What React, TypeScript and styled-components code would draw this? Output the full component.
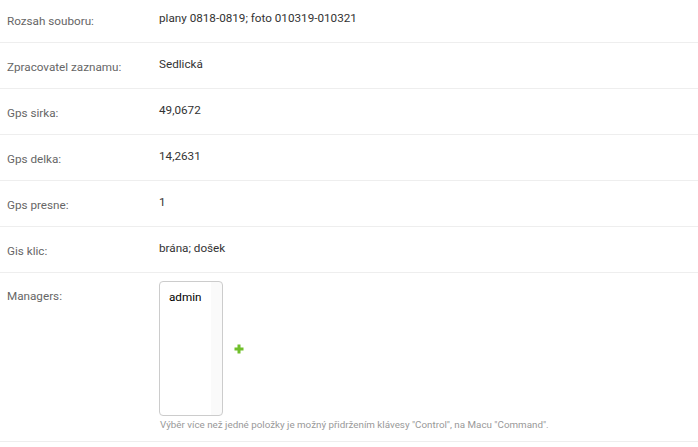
import React from "react";
import styled, { createGlobalStyle } from "styled-components";

const Global = createGlobalStyle`
  html, body { margin: 0; padding: 0; background: #fff; }
  body { font-family: Roboto, "Liberation Sans", sans-serif; color: #333; }
`;

const Fieldset = styled.div`
  margin-top: -3px;
  display: flex;
  flex-direction: column;
`;

const Row = styled.div<{ $top?: number }>`
  display: flex;
  align-items: flex-start;
  padding: ${(p) => p.$top ?? 10}px 7px 10px;
  border-bottom: 1px solid #eee;
  font-size: 11.7px;
`;

const Label = styled.div<{ $top?: number }>`
  width: 152px;
  flex: none;
  color: #666;
  padding-top: ${(p) => p.$top ?? 6}px;
  line-height: 16px;
`;

const Value = styled.div`
  padding: 3px 0 6px;
  line-height: 16px;
  color: #333;
`;

const Field = styled.div`
  display: flex;
  flex-direction: column;
`;

const SelectLine = styled.div`
  display: flex;
  align-items: center;
  gap: 11px;
`;

const MultiSelect = styled.div`
  width: 62px;
  height: 133px;
  border: 1px solid #ccc;
  border-radius: 4px;
  background: linear-gradient(to right, #fff 0, #fff 51px, #fafafa 51px);
  box-sizing: content-box;
`;

const Option = styled.div`
  padding: 7px 0 0 9px;
  font-size: 11.7px;
  line-height: 16px;
  color: #000;
`;

const Help = styled.div`
  margin-top: 3px;
  padding-left: 1px;
  font-size: 9.8px;
  line-height: 12px;
  color: #999;
  white-space: nowrap;
`;

const AddLink = styled.a`
  display: inline-flex;
  width: 10px;
  height: 10px;
`;

const PlusIcon = () => (
  <svg width="10" height="10" viewBox="0 0 10 10">
    <path d="M3.5 0.5h3v3h3v3h-3v3h-3v-3h-3v-3h3z" fill="#70bf2b" />
  </svg>
);

const rows: [string, string][] = [
  ["Rozsah souboru:", "plany 0818-0819; foto 010319-010321"],
  ["Zpracovatel zaznamu:", "Sedlická"],
  ["Gps sirka:", "49,0672"],
  ["Gps delka:", "14,2631"],
  ["Gps presne:", "1"],
  ["Gis klic:", "brána; došek"],
];

export default function App() {
  return (
    <>
      <Global />
      <Fieldset>
        {rows.map(([l, v]) => (
          <Row key={l}>
            <Label>{l}</Label>
            <Value>{v}</Value>
          </Row>
        ))}
        <Row $top={8}>
          <Label $top={7}>Managers:</Label>
          <Field>
            <SelectLine>
              <MultiSelect>
                <Option>admin</Option>
              </MultiSelect>
              <AddLink>
                <PlusIcon />
              </AddLink>
            </SelectLine>
            <Help>
              Výběr více než jedné položky je možný přidržením klávesy "Control", na Macu "Command".
            </Help>
          </Field>
        </Row>
      </Fieldset>
    </>
  );
}
